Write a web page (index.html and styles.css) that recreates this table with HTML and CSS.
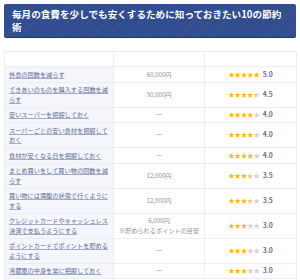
FILE: index.html
```html
<!DOCTYPE html>
<html lang="ja">
<head>
<meta charset="utf-8">
<link rel="stylesheet" href="styles.css">
</head>
<body>
<div class="page">
  <h2 class="title">毎月の食費を少しでも安くするために知っておきたい10の節約術</h2>
  <table class="tbl">
    <colgroup><col class="c1"><col class="c2"><col class="c3"></colgroup>
    <tr class="head"><th></th><th></th><th></th></tr>
    <tr><td class="name"><a>外食の回数を減らす</a></td><td class="val">60,000円</td><td class="rate"><span class="stars"><i class="on">★</i><i class="on">★</i><i class="on">★</i><i class="on">★</i><i class="on">★</i></span><b>5.0</b></td></tr>
    <tr><td class="name"><a>できあいのものを購入する回数を減らす</a></td><td class="val">30,000円</td><td class="rate"><span class="stars"><i class="on">★</i><i class="on">★</i><i class="on">★</i><i class="on">★</i><i class="half">★</i></span><b>4.5</b></td></tr>
    <tr><td class="name"><a>安いスーパーを把握しておく</a></td><td class="val">ー</td><td class="rate"><span class="stars"><i class="on">★</i><i class="on">★</i><i class="on">★</i><i class="on">★</i><i>★</i></span><b>4.0</b></td></tr>
    <tr><td class="name"><a>スーパーごとの安い食材を把握しておく</a></td><td class="val">ー</td><td class="rate"><span class="stars"><i class="on">★</i><i class="on">★</i><i class="on">★</i><i class="on">★</i><i>★</i></span><b>4.0</b></td></tr>
    <tr><td class="name"><a>食材が安くなる日を把握しておく</a></td><td class="val">ー</td><td class="rate"><span class="stars"><i class="on">★</i><i class="on">★</i><i class="on">★</i><i class="on">★</i><i>★</i></span><b>4.0</b></td></tr>
    <tr><td class="name"><a>まとめ買いをして買い物の回数を減らす</a></td><td class="val">12,000円</td><td class="rate"><span class="stars"><i class="on">★</i><i class="on">★</i><i class="on">★</i><i class="half">★</i><i>★</i></span><b>3.5</b></td></tr>
    <tr><td class="name"><a>買い物には満腹の状態で行くようにする</a></td><td class="val">12,000円</td><td class="rate"><span class="stars"><i class="on">★</i><i class="on">★</i><i class="on">★</i><i class="half">★</i><i>★</i></span><b>3.5</b></td></tr>
    <tr><td class="name"><a>クレジットカードやキャッシュレス決済で支払うようにする</a></td><td class="val">6,000円<br><span class="note">※貯められるポイントの目安</span></td><td class="rate"><span class="stars"><i class="on">★</i><i class="on">★</i><i class="on">★</i><i>★</i><i>★</i></span><b>3.0</b></td></tr>
    <tr><td class="name"><a>ポイントカードでポイントを貯めるようにする</a></td><td class="val">ー</td><td class="rate"><span class="stars"><i class="on">★</i><i class="on">★</i><i class="on">★</i><i>★</i><i>★</i></span><b>3.0</b></td></tr>
    <tr><td class="name"><a>冷蔵庫の中身を常に把握しておく</a></td><td class="val">ー</td><td class="rate"><span class="stars"><i class="on">★</i><i class="on">★</i><i class="on">★</i><i>★</i><i>★</i></span><b>3.0</b></td></tr>
  </table>
</div>
</body>
</html>
```
FILE: styles.css
```css
html, body {
  margin: 0;
  padding: 0;
  background: #ffffff;
}
body {
  font-family: "Noto Sans CJK JP", "Noto Sans", sans-serif;
}
.page {
  padding: 4px 4px 0 4px;
}
.title {
  margin: 0 0 14px 0;
  padding: 4px 8px 3px 8px;
  font-size: 9.6px;
  line-height: 13px;
  font-weight: 700;
  color: #ffffff;
  border-radius: 2px;
  background-color: #2f4b8d;
  background-image: repeating-linear-gradient(135deg, rgba(255,255,255,0.05) 0 1px, rgba(255,255,255,0) 1px 3px);
  box-shadow: 0 1px 0 #22386d;
}
.tbl {
  width: 292px;
  border-collapse: collapse;
  table-layout: fixed;
  font-size: 6.2px;
  line-height: 9.5px;
}
.c1 { width: 109px; }
.c2 { width: 91px; }
.c3 { width: 92px; }
.tbl th, .tbl td {
  border: 1px solid #eceef2;
  padding: 2.5px 4px;
  vertical-align: middle;
}
.head th {
  height: 9px;
  background: #ffffff;
}
.name {
  background: #f4f6fc;
}
.name a {
  color: #5f6992;
  text-decoration: underline;
  text-decoration-color: #a3aac6;
}
.val {
  text-align: center;
  color: #929292;
}
.note {
  font-size: 6.2px;
  color: #929292;
}
.rate {
  text-align: center;
  white-space: nowrap;
}
.stars i {
  font-style: normal;
  font-size: 6.6px;
  color: #d2d2d2;
  letter-spacing: -0.3px;
}
.stars i.on {
  color: #f6bb00;
}
.stars i.half {
  background: linear-gradient(90deg, #f6bb00 50%, #d2d2d2 50%);
  -webkit-background-clip: text;
  background-clip: text;
  color: transparent;
}
.rate b {
  margin-left: 3px;
  font-size: 6.8px;
  font-weight: 700;
  color: #676c88;
}
```
